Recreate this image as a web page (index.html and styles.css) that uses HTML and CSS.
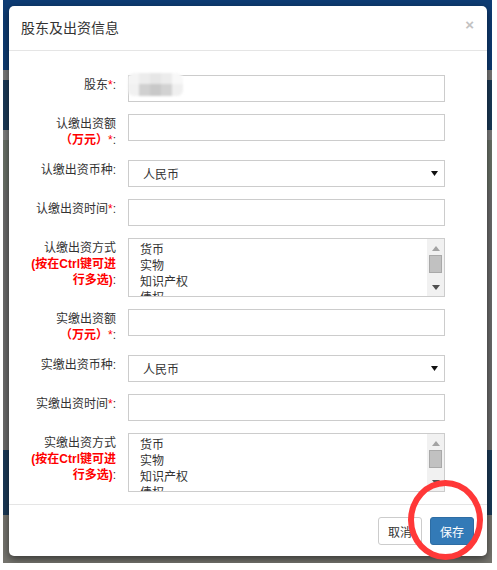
FILE: index.html
```html
<!DOCTYPE html>
<html lang="zh-CN">
<head>
<meta charset="utf-8">
<title>股东及出资信息</title>
<link rel="stylesheet" href="styles.css">
</head>
<body>
<div class="backdrop">
  <div class="modal">
    <div class="modal-header">
      <h4 class="modal-title">股东及出资信息</h4>
      <span class="close">×</span>
    </div>
    <div class="modal-body">
      <div class="row">
        <label class="lbl">股东<em>*</em>:</label>
        <div class="field">
          <div class="input"></div>
          <div class="mosaic">
            <i class="c1"></i><i class="c2"></i><i class="c3"></i><i class="c4"></i><i class="c5"></i>
            <i class="c6"></i><i class="c7"></i><i class="c8"></i><i class="c9"></i><i class="c10"></i>
          </div>
        </div>
      </div>
      <div class="row">
        <label class="lbl">认缴出资额<br><b>（万元）</b><em>*</em>:</label>
        <div class="field"><div class="input"></div></div>
      </div>
      <div class="row">
        <label class="lbl">认缴出资币种:</label>
        <div class="field">
          <div class="input select"><span>人民币</span><svg class="caret" width="7" height="5" viewBox="0 0 7 5"><path d="M0 0H7L3.5 5Z" fill="#111"/></svg></div>
        </div>
      </div>
      <div class="row">
        <label class="lbl">认缴出资时间<em>*</em>:</label>
        <div class="field"><div class="input"></div></div>
      </div>
      <div class="row">
        <label class="lbl">认缴出资方式<br><b>(按在Ctrl键可进<br>行多选)</b>:</label>
        <div class="field">
          <div class="input multi">
            <ul class="opts"><li>货币</li><li>实物</li><li>知识产权</li><li>债权</li></ul>
            <div class="sbar">
              <svg class="arr" width="8" height="5" viewBox="0 0 8 5"><path d="M0 5H8L4 0Z" fill="#a3a3a3"/></svg>
              <div class="thumb"></div>
              <svg class="arr down" width="8" height="5" viewBox="0 0 8 5"><path d="M0 0H8L4 5Z" fill="#505050"/></svg>
            </div>
          </div>
        </div>
      </div>
      <div class="row">
        <label class="lbl">实缴出资额<br><b>（万元）</b><em>*</em>:</label>
        <div class="field"><div class="input"></div></div>
      </div>
      <div class="row">
        <label class="lbl">实缴出资币种:</label>
        <div class="field">
          <div class="input select"><span>人民币</span><svg class="caret" width="7" height="5" viewBox="0 0 7 5"><path d="M0 0H7L3.5 5Z" fill="#111"/></svg></div>
        </div>
      </div>
      <div class="row">
        <label class="lbl">实缴出资时间<em>*</em>:</label>
        <div class="field"><div class="input"></div></div>
      </div>
      <div class="row">
        <label class="lbl">实缴出资方式<br><b>(按在Ctrl键可进<br>行多选)</b>:</label>
        <div class="field">
          <div class="input multi">
            <ul class="opts"><li>货币</li><li>实物</li><li>知识产权</li><li>债权</li></ul>
            <div class="sbar">
              <svg class="arr" width="8" height="5" viewBox="0 0 8 5"><path d="M0 5H8L4 0Z" fill="#a3a3a3"/></svg>
              <div class="thumb"></div>
              <svg class="arr down" width="8" height="5" viewBox="0 0 8 5"><path d="M0 0H8L4 5Z" fill="#505050"/></svg>
            </div>
          </div>
        </div>
      </div>
    </div>
    <div class="modal-footer">
      <button class="btn">取消</button>
      <button class="btn primary">保存</button>
    </div>
  </div>
  <div class="annot"></div>
</div>
</body>
</html>
```
FILE: styles.css
```css
html, body {
  margin: 0;
  padding: 0;
  background: #fff;
}
body {
  font-family: "Liberation Sans", "Noto Sans CJK SC", sans-serif;
  font-size: 12px;
  color: #333;
}
.backdrop {
  position: relative;
  margin-left: 3px;
  width: 489px;
  height: 563px;
  box-sizing: border-box;
  padding: 6px 0 0 6px;
  background: linear-gradient(to bottom,
    #0e3c74 0, #0e3c74 70px,
    #7a7a7a 70px, #7a7a7a 80px,
    #1b3a58 80px, #1b3a58 130px,
    #808080 130px, #808080 140px,
    #6b7268 140px, #6b7268 190px,
    #6c6c6c 190px, #6c6c6c 450px,
    #1b3a58 450px, #1b3a58 515px,
    #76756f 515px, #76756f 563px);
  overflow: hidden;
}
.modal {
  width: 478px;
  height: 550px;
  background: #fff;
  border-radius: 5px;
  box-shadow: 0 3px 8px rgba(0, 0, 0, 0.55);
  display: flex;
  flex-direction: column;
}
.modal-header {
  height: 44px;
  border-bottom: 1px solid #e5e5e5;
  display: flex;
  align-items: center;
  justify-content: space-between;
  padding: 0 13px 0 12px;
}
.modal-title {
  margin: 0;
  font-size: 14px;
  font-weight: normal;
  color: #333;
  line-height: 20px;
}
.close {
  font-size: 15px;
  font-weight: bold;
  color: #c2c2c2;
  line-height: 1;
  margin-top: -8px;
}
.modal-body {
  padding: 24px 42px 12px 12px;
  display: flex;
  flex-direction: column;
  gap: 12px;
}
.row {
  display: flex;
  gap: 12px;
  align-items: flex-start;
}
.lbl {
  width: 95px;
  flex: none;
  text-align: right;
  line-height: 16px;
  padding-top: 2px;
  color: #333;
}
.lbl em {
  font-style: normal;
  color: #f00;
}
.lbl b {
  color: #f00;
  font-weight: bold;
}
.field {
  position: relative;
  flex: 1;
}
.input {
  height: 27px;
  box-sizing: border-box;
  border: 1px solid #ccc;
  background: #fff;
}
.select {
  display: flex;
  align-items: center;
  justify-content: space-between;
  padding: 0 6px 0 14px;
  font-size: 12px;
  color: #333;
}
.caret {
  display: block;
}
.multi {
  height: 59px;
  display: flex;
  overflow: hidden;
}
.opts {
  list-style: none;
  margin: 0;
  padding: 3px 0 0 11px;
  flex: 1;
  line-height: 16px;
  color: #333;
}
.sbar {
  width: 17px;
  flex: none;
  background: #f1f1f1;
  display: flex;
  flex-direction: column;
  align-items: center;
}
.arr {
  display: block;
  margin-top: 7px;
}
.arr.down {
  margin-top: auto;
  margin-bottom: 6px;
}
.thumb {
  width: 11px;
  height: 16px;
  margin-top: 4px;
  background: #c1c1c1;
  border: 1px solid #a9a9a9;
}
.mosaic {
  position: absolute;
  left: 0;
  top: -2px;
  width: 55px;
  height: 23px;
  display: grid;
  grid-template-columns: repeat(5, 11px);
  grid-template-rows: 11px 12px;
  filter: blur(1px);
  border-radius: 6px;
  overflow: hidden;
}
.mosaic .c1 { background: #f4f4f4; }
.mosaic .c2 { background: #ececec; }
.mosaic .c3 { background: #e6e6e6; }
.mosaic .c4 { background: #ececec; }
.mosaic .c5 { background: #f8f8f8; }
.mosaic .c6 { background: #f1f1f1; }
.mosaic .c7 { background: #d0d0d0; }
.mosaic .c8 { background: #c8c8c8; }
.mosaic .c9 { background: #d2d2d2; }
.mosaic .c10 { background: #efefef; }
.modal-footer {
  margin-top: auto;
  border-top: 1px solid #e5e5e5;
  padding: 12px 13px 11px;
  display: flex;
  justify-content: flex-end;
  gap: 8px;
}
.btn {
  height: 28px;
  padding: 0 9px;
  font-family: inherit;
  font-size: 12px;
  border: 1px solid #ccc;
  border-radius: 3px;
  background: #fff;
  color: #333;
}
.btn.primary {
  background: #337ab7;
  border-color: #2e6da4;
  color: #fff;
}
.annot {
  position: absolute;
  left: 405px;
  top: 480px;
  width: 75px;
  height: 80px;
  box-sizing: border-box;
  border: 6px solid #ff3838;
  border-radius: 50%;
}
```
